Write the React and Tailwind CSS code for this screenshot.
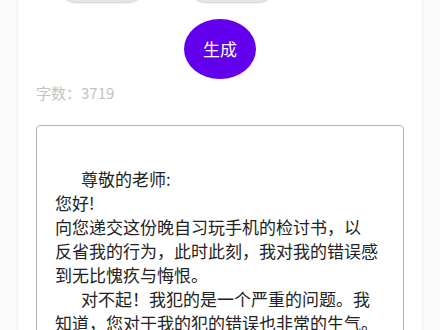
import React from "react";

const lines = [
  { indent: true, text: "尊敬的老师:" },
  { text: "您好!" },
  { text: "向您递交这份晚自习玩手机的检讨书，以" },
  { text: "反省我的行为，此时此刻，我对我的错误感" },
  { text: "到无比愧疚与悔恨。" },
  { indent: true, text: "对不起！我犯的是一个严重的问题。我" },
  { text: "知道，您对于我的犯的错误也非常的生气。" },
  { text: "我是一名学生，应该遵守学校纪律，而我" },
];

export default function App() {
  return (
    <div
      className="h-[330px] w-[440px] overflow-hidden bg-[#fafafa] px-[17px]"
      style={{ fontFamily: '"Noto Sans CJK SC", "Noto Sans", sans-serif' }}
    >
      <div className="flex h-full flex-col border-x border-[#f0f0f0] bg-white">
        {/* top buttons, mostly scrolled out of view */}
        <div className="-mt-[38px] flex shrink-0 gap-[40px] pl-[39px]">
          <div className="h-[40px] w-[90px] rounded-[20px] bg-[#e6e6e6] shadow-[0_1px_2px_rgba(0,0,0,0.2)]" />
          <div className="h-[40px] w-[90px] rounded-[20px] bg-[#e6e6e6] shadow-[0_1px_2px_rgba(0,0,0,0.2)]" />
        </div>

        <div className="mt-[17px] flex shrink-0 justify-center">
          <button className="flex h-[60px] w-[72px] items-center justify-center rounded-[50%] bg-[#6200ee] text-[17px] text-white">
            生成
          </button>
        </div>

        <div className="mt-[2px] shrink-0 pl-[18px] text-[15px] leading-[24px] text-[#c2c2c2]">
          字数：3719
        </div>

        <div className="ml-[18px] mt-[20px] h-[260px] w-[368px] shrink-0 rounded-[4px] border-[1.5px] border-[#b4b4b4] pl-[18px] pt-[41px] text-[17px] leading-[24px] text-[#222]">
          {lines.map((l, i) => (
            <div key={i} className="whitespace-nowrap">
              {l.indent && <span className="inline-block w-[26px]" />}
              {l.text}
            </div>
          ))}
        </div>
      </div>
    </div>
  );
}
